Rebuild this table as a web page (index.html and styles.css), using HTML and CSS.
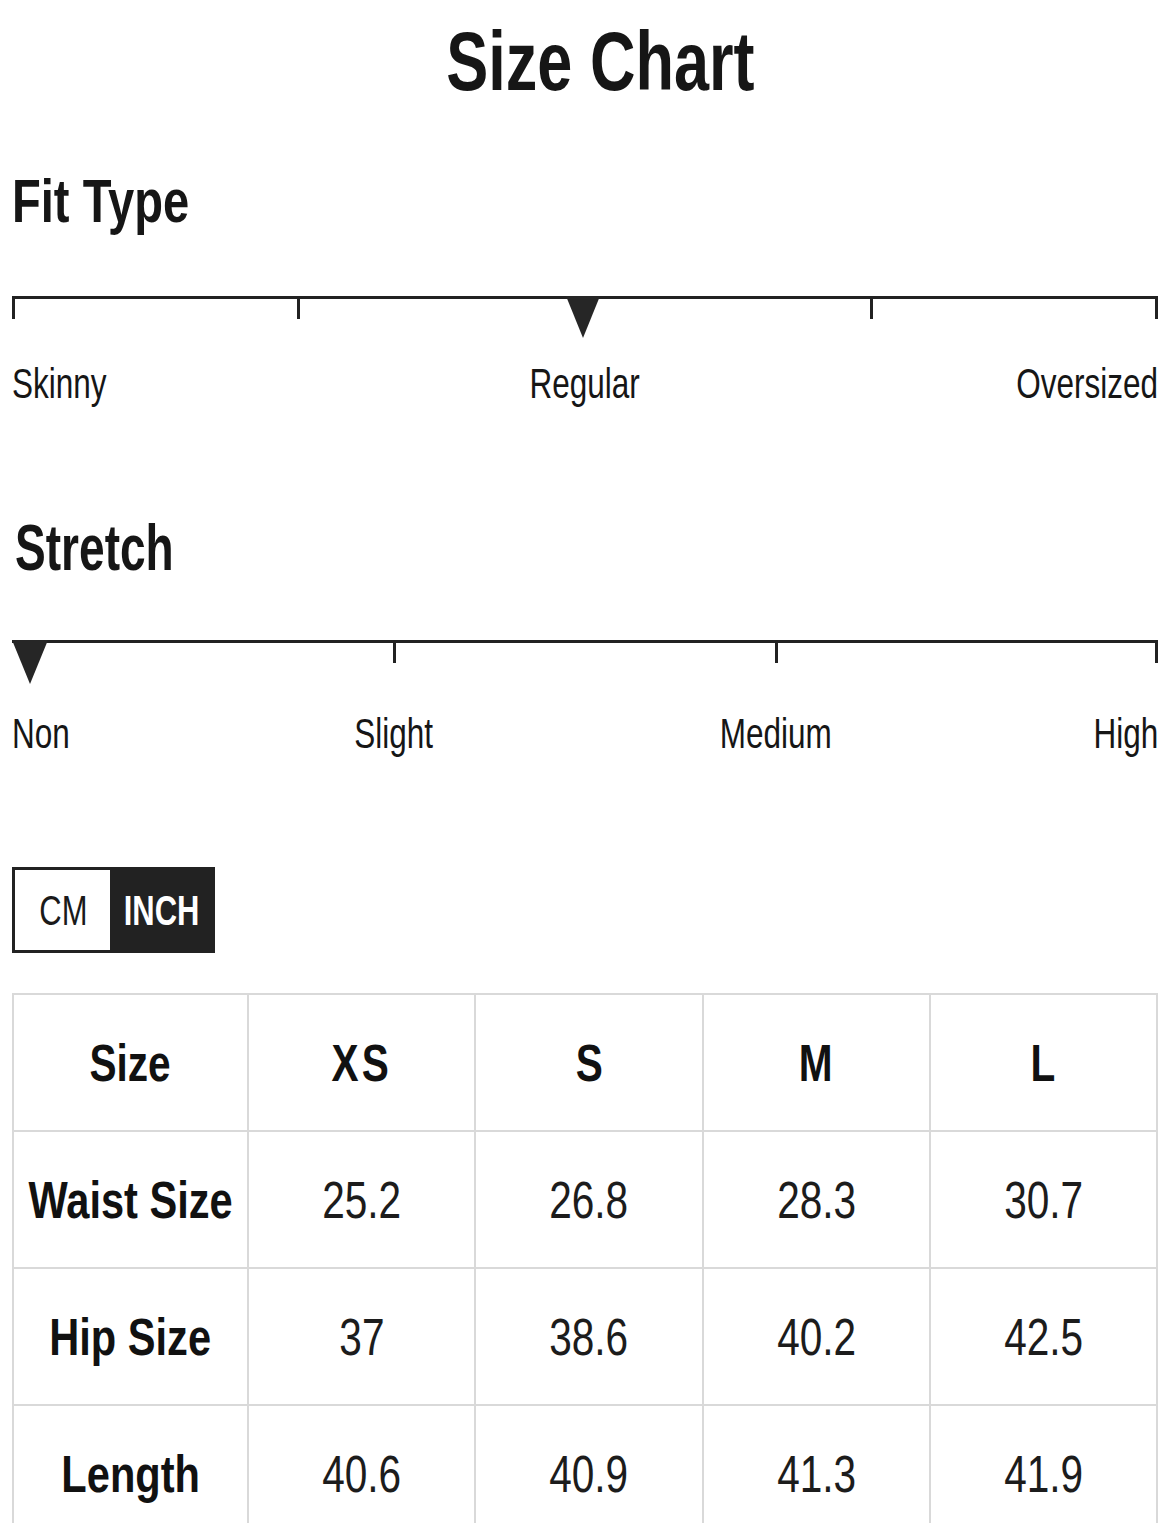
FILE: index.html
```html
<!DOCTYPE html>
<html lang="en">
<head>
<meta charset="utf-8">
<title>Size Chart</title>
<link rel="stylesheet" href="styles.css">
</head>
<body>
<main class="page">
  <h1 class="title"><span class="sq sq-c">Size Chart</span></h1>

  <section class="meter meter-fit">
    <h2 class="meter-title"><span class="sq">Fit Type</span></h2>
    <div class="track">
      <span class="tick at-0"></span>
      <span class="tick at-25"></span>
      <span class="marker marker-50"></span>
      <span class="tick at-75"></span>
      <span class="tick at-100"></span>
    </div>
    <div class="labels labels-3">
      <span class="lab lab-start"><span class="sq">Skinny</span></span>
      <span class="lab lab-center"><span class="sq sq-c">Regular</span></span>
      <span class="lab lab-end"><span class="sq sq-r">Oversized</span></span>
    </div>
  </section>

  <section class="meter meter-stretch">
    <h2 class="meter-title"><span class="sq">Stretch</span></h2>
    <div class="track">
      <span class="marker marker-0"></span>
      <span class="tick at-33"></span>
      <span class="tick at-67"></span>
      <span class="tick at-100"></span>
    </div>
    <div class="labels labels-6">
      <span class="lab lab-start l-1"><span class="sq">Non</span></span>
      <span class="lab lab-center l-2"><span class="sq sq-c">Slight</span></span>
      <span class="lab lab-center l-3"><span class="sq sq-c">Medium</span></span>
      <span class="lab lab-end l-4"><span class="sq sq-r">High</span></span>
    </div>
  </section>

  <div class="units">
    <span class="unit unit-cm"><span class="sq sq-c">CM</span></span>
    <span class="unit unit-inch"><span class="sq sq-c">INCH</span></span>
  </div>

  <div class="chart">
    <div class="cell head"><span class="sq sq-c">Size</span></div>
    <div class="cell head"><span class="sq sq-c spaced">XS</span></div>
    <div class="cell head"><span class="sq sq-c">S</span></div>
    <div class="cell head"><span class="sq sq-c">M</span></div>
    <div class="cell head"><span class="sq sq-c">L</span></div>

    <div class="cell head row-head"><span class="sq sq-c">Waist Size</span></div>
    <div class="cell"><span class="sq sq-c">25.2</span></div>
    <div class="cell"><span class="sq sq-c">26.8</span></div>
    <div class="cell"><span class="sq sq-c">28.3</span></div>
    <div class="cell"><span class="sq sq-c">30.7</span></div>

    <div class="cell head row-head"><span class="sq sq-c">Hip Size</span></div>
    <div class="cell"><span class="sq sq-c">37</span></div>
    <div class="cell"><span class="sq sq-c">38.6</span></div>
    <div class="cell"><span class="sq sq-c">40.2</span></div>
    <div class="cell"><span class="sq sq-c">42.5</span></div>

    <div class="cell head row-head"><span class="sq sq-c">Length</span></div>
    <div class="cell"><span class="sq sq-c">40.6</span></div>
    <div class="cell"><span class="sq sq-c">40.9</span></div>
    <div class="cell"><span class="sq sq-c">41.3</span></div>
    <div class="cell"><span class="sq sq-c">41.9</span></div>
  </div>
</main>
</body>
</html>
```

FILE: styles.css
```css
* { box-sizing: border-box; }

html, body {
  margin: 0;
  padding: 0;
  background: #ffffff;
}

body {
  font-family: "Liberation Sans", Arial, sans-serif;
  color: #161616;
  line-height: 1;
}

.page {
  padding: 0 12px;
}

/* condensed text */
.sq {
  display: inline-block;
  white-space: nowrap;
  transform: scaleX(0.76);
  transform-origin: left center;
}
.sq-c { transform-origin: center center; }
.sq-r { transform-origin: right center; }

.title {
  margin: 0;
  padding-top: 19px;
  padding-left: 30px;
  font-size: 84px;
  font-weight: 700;
  line-height: 1;
  text-align: center;
  display: flex;
  justify-content: center;
}
.title .sq { transform: scaleX(0.75); }

.meter-title {
  margin: 0;
  font-size: 62px;
  font-weight: 700;
  line-height: 1;
}

.meter-fit { margin-top: 67px; }
.meter-fit .meter-title .sq { transform: scaleX(0.76); }

.meter-stretch { margin-top: 111px; }
.meter-stretch .meter-title {
  font-size: 64px;
  padding-left: 3px;
}
.meter-stretch .meter-title .sq { transform: scaleX(0.72); }

.track {
  position: relative;
  height: 43px;
  border-top: 3px solid #222;
}
.meter-fit .track { margin-top: 64px; }
.meter-stretch .track { margin-top: 60px; }

.tick {
  position: absolute;
  top: 0;
  width: 3px;
  height: 20px;
  background: #222;
}
.at-0 { left: 0; }
.at-25 { left: calc(25% - 1.5px); }
.at-33 { left: calc(33.4% - 1.5px); }
.at-67 { left: calc(66.7% - 1.5px); }
.at-75 { left: calc(75% - 1.5px); }
.at-100 { right: 0; }

.marker {
  position: absolute;
  top: -3px;
  width: 0;
  height: 0;
  border-left: 17px solid transparent;
  border-right: 17px solid transparent;
  border-top: 42px solid #262626;
}
.marker-50 { left: calc(49.8% - 17px); }
.marker-0 {
  left: 0;
  border-left-width: 18px;
  border-right-width: 18px;
  border-top-width: 44px;
}

.labels {
  display: grid;
  font-size: 42px;
  line-height: 1;
}
.meter-fit .labels { margin-top: 24px; }
.meter-stretch .labels { margin-top: 30px; }

.labels-3 { grid-template-columns: 1fr 1fr 1fr; }
.labels-6 { grid-template-columns: repeat(6, 1fr); }

.lab { display: flex; }
.lab-start { justify-content: flex-start; }
.lab-center { justify-content: center; }
.lab-end { justify-content: flex-end; }

.l-1 { grid-column: 1; }
.l-2 { grid-column: 2 / span 2; }
.l-3 { grid-column: 4 / span 2; }
.l-4 { grid-column: 6; }

.labels .sq { transform: scaleX(0.75); }
.labels .sq-c { transform-origin: center center; }
.labels .sq-r { transform-origin: right center; }

.units {
  display: flex;
  margin-top: 112px;
  height: 86px;
  width: 203px;
}
.unit {
  display: flex;
  align-items: center;
  justify-content: center;
  font-size: 43px;
}
.unit-cm {
  width: 98px;
  background: #fff;
  border: 3px solid #222;
  border-right: none;
  color: #1a1a1a;
  padding-left: 2px;
}
.unit-inch {
  width: 105px;
  background: #222;
  color: #fff;
  font-weight: 700;
  padding-right: 2px;
}
.units .sq { transform: scaleX(0.72); }

.chart {
  margin-top: 40px;
  display: grid;
  grid-template-columns: 235px repeat(4, 1fr);
  grid-auto-rows: 137px;
  border-top: 2px solid #d9d9d9;
  border-left: 2px solid #d9d9d9;
}
.cell {
  display: flex;
  align-items: center;
  justify-content: center;
  border-right: 2px solid #d9d9d9;
  border-bottom: 2px solid #d9d9d9;
  font-size: 52px;
  color: #1c1c1c;
}
.cell.head { font-weight: 700; color: #111; }
.chart .sq { transform: scaleX(0.78); }
.chart .row-head .sq { transform: scaleX(0.8); }
.chart .spaced { letter-spacing: 4px; }
```
